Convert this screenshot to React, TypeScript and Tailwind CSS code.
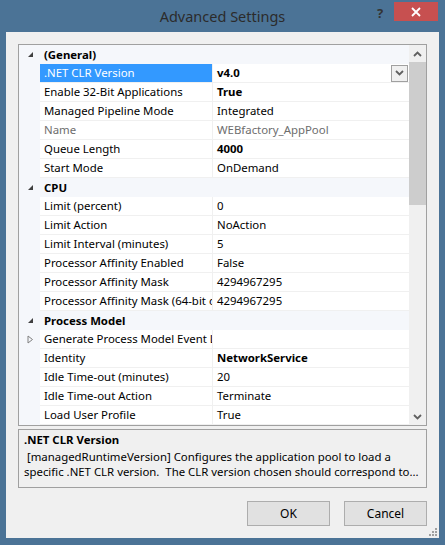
type Row = {
  label: string;
  value?: string;
  bold?: boolean;
  dim?: boolean;
  selected?: boolean;
  dropdown?: boolean;
  expandable?: boolean;
};

type Category = { title: string; rows: Row[] };

const categories: Category[] = [
  {
    title: "(General)",
    rows: [
      { label: ".NET CLR Version", value: "v4.0", bold: true, selected: true, dropdown: true },
      { label: "Enable 32-Bit Applications", value: "True", bold: true },
      { label: "Managed Pipeline Mode", value: "Integrated" },
      { label: "Name", value: "WEBfactory_AppPool", dim: true },
      { label: "Queue Length", value: "4000", bold: true },
      { label: "Start Mode", value: "OnDemand" },
    ],
  },
  {
    title: "CPU",
    rows: [
      { label: "Limit (percent)", value: "0" },
      { label: "Limit Action", value: "NoAction" },
      { label: "Limit Interval (minutes)", value: "5" },
      { label: "Processor Affinity Enabled", value: "False" },
      { label: "Processor Affinity Mask", value: "4294967295" },
      { label: "Processor Affinity Mask (64-bit option)", value: "4294967295" },
    ],
  },
  {
    title: "Process Model",
    rows: [
      { label: "Generate Process Model Event Log Entry", expandable: true },
      { label: "Identity", value: "NetworkService", bold: true },
      { label: "Idle Time-out (minutes)", value: "20" },
      { label: "Idle Time-out Action", value: "Terminate" },
      { label: "Load User Profile", value: "True" },
    ],
  },
];

function Chevron({ up = false }: { up?: boolean }) {
  return (
    <svg width="9" height="6" viewBox="0 0 9 6">
      <path
        d={up ? "M1 5 L4.5 1.5 L8 5" : "M1 1 L4.5 4.5 L8 1"}
        fill="none"
        stroke="#606060"
        strokeWidth="1.8"
      />
    </svg>
  );
}

function CollapseGlyph() {
  return (
    <svg width="7" height="7" viewBox="0 0 7 7">
      <path d="M6 1 L6 6 L1 6 Z" fill="#404040" />
    </svg>
  );
}

function ExpandGlyph() {
  return (
    <svg width="7" height="9" viewBox="0 0 7 9">
      <path d="M1 1 L5.5 4.5 L1 8 Z" fill="none" stroke="#808080" strokeWidth="1" />
    </svg>
  );
}

function PropertyRow({ row }: { row: Row }) {
  return (
    <div className="flex h-[19px] shrink-0">
      <div className="w-[21px] shrink-0 bg-[#f5f7fb] flex items-center justify-center pl-[2px]">
        {row.expandable && <ExpandGlyph />}
      </div>
      <div
        className={`w-[172px] shrink-0 border-b border-[#f0f0f0] pl-[4px] overflow-hidden whitespace-nowrap leading-[18px] ${
          row.selected ? "bg-[#3399ff] text-white border-[#3399ff]" : row.dim ? "text-[#6d6d6d] bg-white" : "bg-white"
        }`}
      >
        {row.label}
      </div>
      <div className="w-px shrink-0 bg-[#f0f0f0]" />
      <div
        className={`flex-1 min-w-0 border-b border-[#f0f0f0] bg-white pl-[4px] flex items-center whitespace-nowrap overflow-hidden ${
          row.bold ? "font-bold" : ""
        } ${row.dim ? "text-[#6d6d6d]" : ""}`}
      >
        <span className="flex-1 leading-[18px]">{row.value}</span>
        {row.dropdown && (
          <span className="w-[17px] h-[17px] mr-px border border-[#a0a0a0] bg-[#f0f0f0] flex items-center justify-center">
            <Chevron />
          </span>
        )}
      </div>
    </div>
  );
}

function CategoryRow({ title }: { title: string }) {
  return (
    <div className="flex h-[19px] shrink-0 bg-[#f5f7fb] items-center">
      <div className="w-[21px] shrink-0 flex items-center justify-center pl-[2px]">
        <CollapseGlyph />
      </div>
      <div className="pl-[4px] font-bold">{title}</div>
    </div>
  );
}

export default function App() {
  return (
    <div
      className="w-[445px] h-[545px] bg-[#4b7396] flex flex-col overflow-hidden text-[11.4px] text-black"
      style={{ fontFamily: '"Noto Sans", "Open Sans", sans-serif' }}
    >
      <div className="h-[32px] shrink-0 relative flex items-center justify-center">
        <span className="text-[14.5px] text-[#2b2b2b] pt-[1px]">Advanced Settings</span>
        <span className="absolute left-[377px] top-[4px] text-[13px] font-bold text-[#333]">?</span>
        <div className="absolute left-[394px] top-[2px] w-[44px] h-[19px] bg-[#c75050] flex items-center justify-center">
          <svg width="10" height="10" viewBox="0 0 10 10">
            <path d="M1 1 L9 9 M9 1 L1 9" stroke="white" strokeWidth="1.8" />
          </svg>
        </div>
      </div>

      <div className="flex-1 mx-[6px] bg-[#f0f0f0] flex flex-col px-[12px] pt-[12px] relative">
        <div className="h-[382px] shrink-0 border border-[#a0a0a0] bg-white flex overflow-hidden">
          <div className="flex-1 flex flex-col overflow-hidden">
            {categories.map((cat) => (
              <div key={cat.title} className="flex flex-col shrink-0">
                <CategoryRow title={cat.title} />
                {cat.rows.map((row) => (
                  <PropertyRow key={row.label} row={row} />
                ))}
              </div>
            ))}
          </div>
          <div className="w-[17px] shrink-0 bg-[#f0f0f0] flex flex-col items-center">
            <div className="h-[17px] w-full flex items-center justify-center">
              <Chevron up />
            </div>
            <div className="w-full h-[143px] bg-[#cdcdcd]" />
            <div className="flex-1" />
            <div className="h-[17px] w-full flex items-center justify-center">
              <Chevron />
            </div>
          </div>
        </div>

        <div className="mt-[3px] h-[59px] shrink-0 border border-[#a0a0a0] px-[5px] pt-[1px] overflow-hidden">
          <div className="font-bold leading-[18px]">.NET CLR Version</div>
          <div className="leading-[15px] whitespace-pre">
            {" [managedRuntimeVersion] Configures the application pool to load a"}
          </div>
          <div className="leading-[15px] whitespace-pre">
            {"specific .NET CLR version.  The CLR version chosen should correspond to..."}
          </div>
        </div>

        <div className="flex justify-end gap-[14px] mt-[13px]">
          <button className="w-[83px] h-[25px] border border-[#adadad] bg-[#e1e1e1] text-[12px]">OK</button>
          <button className="w-[83px] h-[25px] border border-[#adadad] bg-[#e1e1e1] text-[12px]">Cancel</button>
        </div>

        <svg className="absolute right-[2px] bottom-[2px]" width="9" height="9" viewBox="0 0 9 9">
          <g fill="#a0a0a0">
            <rect x="7" y="1" width="2" height="2" />
            <rect x="4" y="4" width="2" height="2" />
            <rect x="7" y="4" width="2" height="2" />
            <rect x="1" y="7" width="2" height="2" />
            <rect x="4" y="7" width="2" height="2" />
            <rect x="7" y="7" width="2" height="2" />
          </g>
        </svg>
      </div>
      <div className="h-[7px] shrink-0" />
    </div>
  );
}
